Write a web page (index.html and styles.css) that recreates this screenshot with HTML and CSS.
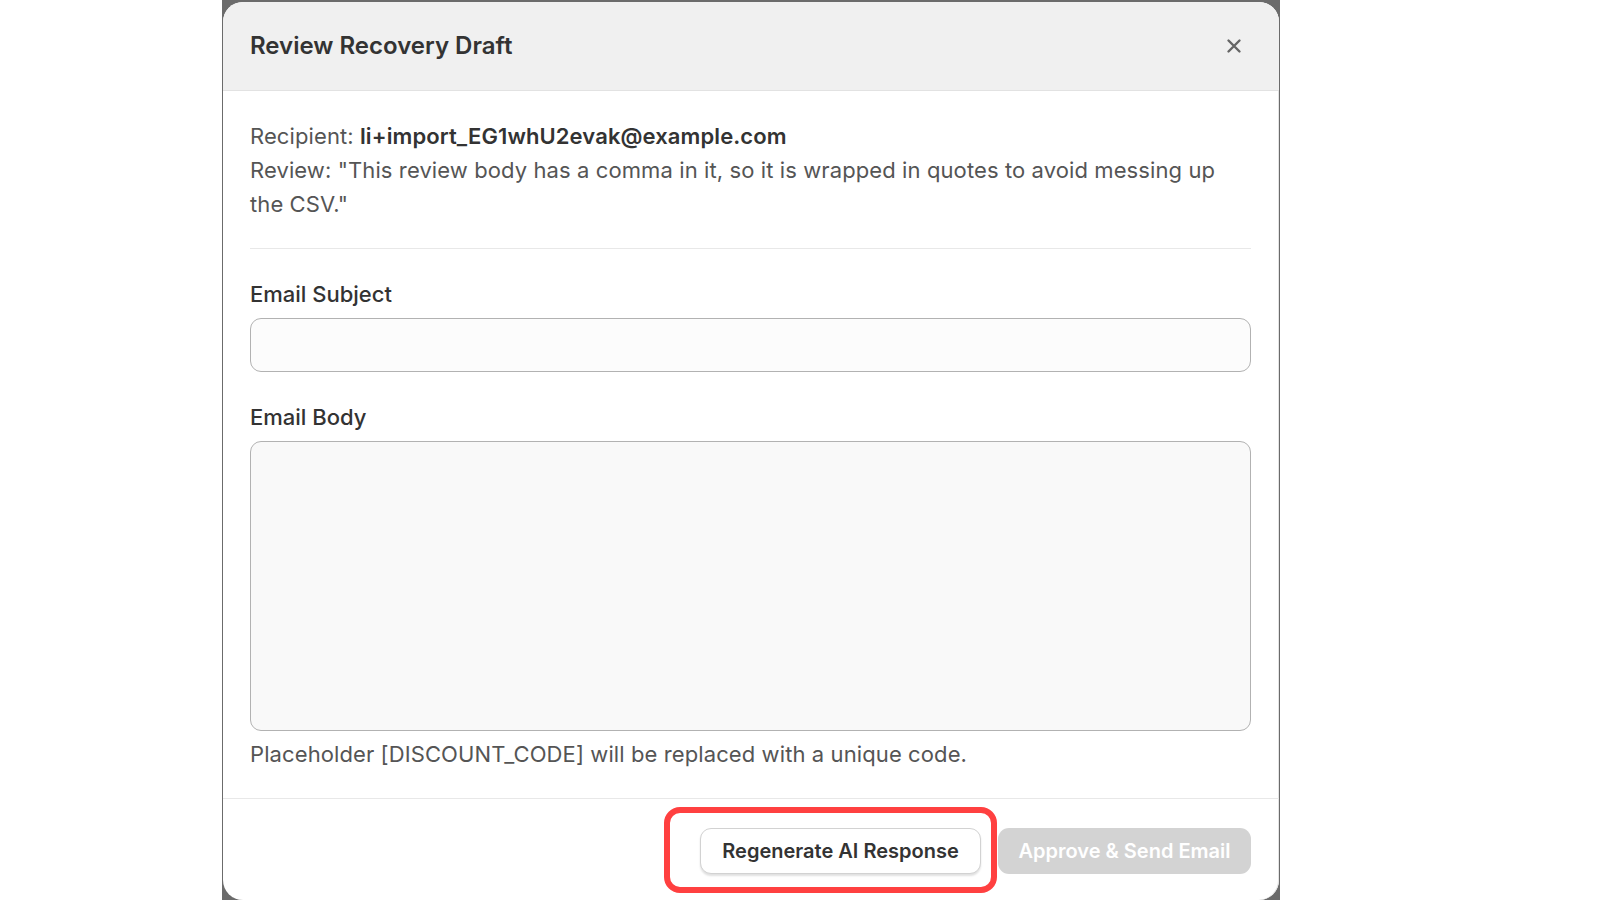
FILE: index.html
```html
<!DOCTYPE html>
<html lang="en">
<head>
    <meta charset="utf-8" />
    <title>Review Recovery Draft</title>
    <link rel="stylesheet" href="styles.css">
</head>
<body>

    <div class="backdrop">

        <div class="modal">

            <header class="modal-header">
                <h2>Review Recovery Draft</h2>
                <button class="close-btn" aria-label="Close">
                    <svg width="16" height="16" viewBox="0 0 16 16">
                        <path d="M2.5 2.5 L13.5 13.5 M13.5 2.5 L2.5 13.5" stroke="#666" stroke-width="2.4" stroke-linecap="round" fill="none"/>
                    </svg>
                </button>
            </header>

            <div class="modal-body">

                <div class="review-info">
                    <p>Recipient: <strong>li+import_EG1whU2evak@example.com</strong></p>
                    <p>Review: "This review body has a comma in it, so it is wrapped in quotes to avoid messing up the CSV."</p>
                </div>

                <label class="field-label" for="subject">Email Subject</label>
                <input class="field-input" id="subject" type="text">

                <label class="field-label" for="body">Email Body</label>
                <textarea class="field-textarea" id="body"></textarea>

                <p class="hint">Placeholder [DISCOUNT_CODE] will be replaced with a unique code.</p>

            </div>

            <footer class="modal-footer">
                <div class="regen-wrap">
                    <button class="btn btn-secondary">Regenerate AI Response</button>
                    <span class="highlight"></span>
                </div>
                <button class="btn btn-primary" disabled>Approve &amp; Send Email</button>
            </footer>

        </div>

    </div>

</body>
</html>
```

FILE: styles.css
```css
body{
    margin: 0;
    background: #fff;
    font-family: Inter, "Noto Sans", sans-serif;
    color: #333;
}

.backdrop{
    margin-left: 222px;
    width: 1058px;
    height: 900px;
    background: #6b6b6b;
    padding: 2px 0 0 1px;
    box-sizing: border-box;
    overflow: hidden;
}

.modal{
    width: 1056px;
    height: 898px;
    background: #fff;
    border-radius: 20px;
    overflow: hidden;
    box-shadow: inset -1px 0 0 #e4e4e4;
}

.modal-header{
    display: flex;
    align-items: center;
    justify-content: space-between;
    height: 89px;
    padding: 0 37px 1px 27px;
    box-sizing: border-box;
    background: #f0f0f0;
    border-bottom: 1px solid #e2e2e2;
}

.modal-header h2{
    margin: 0;
    font-size: 24px;
    font-weight: 600;
    color: #333;
}

.close-btn{
    background: none;
    border: 0;
    padding: 0;
    display: flex;
    cursor: pointer;
}

.modal-body{
    padding: 28px 28px 29px 27px;
    display: flex;
    flex-direction: column;
}

.review-info{
    padding-bottom: 27px;
    border-bottom: 1px solid #e8e8e8;
    margin-bottom: 30px;
}

.review-info p{
    margin: 0;
    font-size: 22px;
    line-height: 34px;
    letter-spacing: 0.1px;
    color: #555;
}

.review-info strong{
    color: #333;
    font-weight: 600;
}

.field-label{
    font-size: 22px;
    line-height: 30px;
    font-weight: 500;
    color: #333;
    margin-bottom: 9px;
}

.field-input,
.field-textarea{
    box-sizing: border-box;
    width: 100%;
    border: 1.5px solid #b2b2b2;
    border-radius: 11px;
    font: inherit;
    outline: none;
}

.field-input{
    height: 54px;
    background: #fcfcfc;
    margin-bottom: 30px;
}

.field-textarea{
    height: 290px;
    background: #f9f9f9;
    resize: none;
}

.hint{
    margin: 8px 0 0;
    font-size: 22px;
    line-height: 30px;
    letter-spacing: 0.1px;
    color: #555;
}

.modal-footer{
    display: flex;
    justify-content: flex-end;
    align-items: center;
    gap: 17px;
    padding: 29px 28px 0;
    border-top: 1px solid #e8e8e8;
}

.regen-wrap{
    position: relative;
}

.btn{
    height: 46px;
    padding: 0 20px;
    border-radius: 11px;
    font-family: inherit;
    font-size: 20px;
    font-weight: 600;
}

.btn-secondary{
    width: 281px;
    background: #fff;
    color: #333;
    border: 1px solid #d2d2d2;
    box-shadow: 0 2px 2px rgba(0,0,0,0.12);
}

.btn-primary{
    width: 253px;
    background: #d3d3d3;
    color: #fff;
    border: 0;
}

/* red call-out drawn round the regenerate button */
.highlight{
    position: absolute;
    left: -36px;
    top: -21px;
    width: 333px;
    height: 86px;
    box-sizing: border-box;
    border: 6px solid #ff4040;
    border-radius: 16px;
    pointer-events: none;
}
```
